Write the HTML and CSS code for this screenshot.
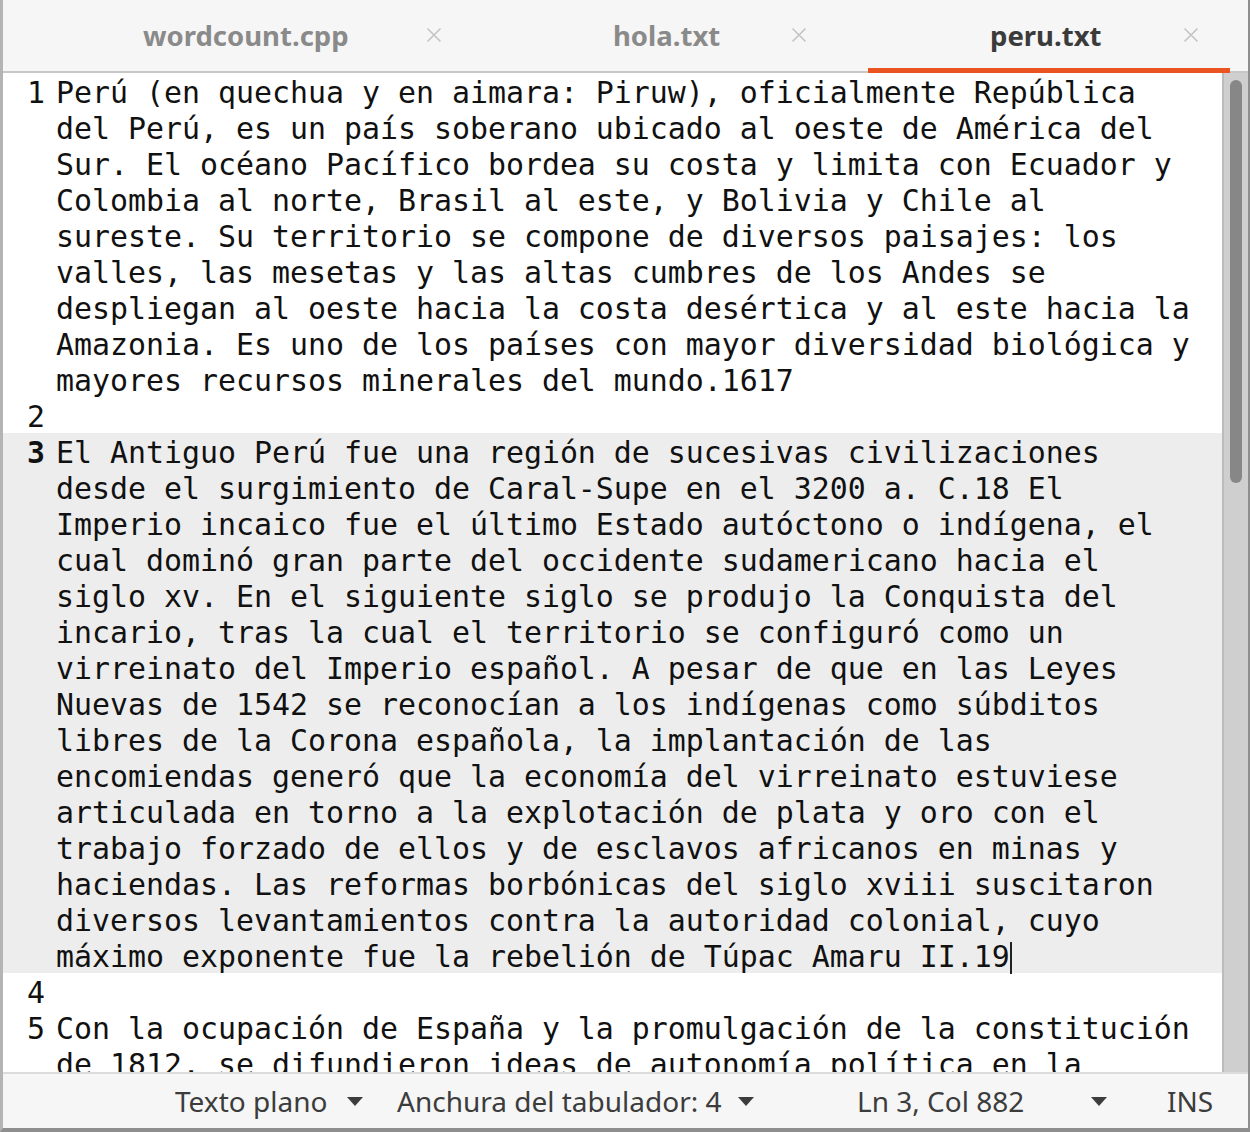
FILE: index.html
```html
<!DOCTYPE html>
<html lang="es">
<head>
<meta charset="utf-8">
<title>peru.txt</title>
<link rel="stylesheet" href="styles.css">
</head>
<body>
<div class="window">
  <div class="tabbar">
    <div class="tab tab1">
      <span class="label">wordcount.cpp</span>
      <svg class="close" width="16" height="16" viewBox="0 0 16 16"><path d="M1.5 1.5 L14.5 14.5 M14.5 1.5 L1.5 14.5"/></svg>
    </div>
    <div class="tab tab2">
      <span class="label">hola.txt</span>
      <svg class="close" width="16" height="16" viewBox="0 0 16 16"><path d="M1.5 1.5 L14.5 14.5 M14.5 1.5 L1.5 14.5"/></svg>
    </div>
    <div class="tab tab3 active">
      <span class="label">peru.txt</span>
      <svg class="close" width="16" height="16" viewBox="0 0 16 16"><path d="M1.5 1.5 L14.5 14.5 M14.5 1.5 L1.5 14.5"/></svg>
    </div>
  </div>
  <div class="editor">
    <div class="textarea">
      <div class="row">
        <div class="num">1</div>
        <div class="txt">
          <div class="vl">Perú (en quechua y en aimara: Piruw), oficialmente República</div>
          <div class="vl">del Perú, es un país soberano ubicado al oeste de América del</div>
          <div class="vl">Sur. El océano Pacífico bordea su costa y limita con Ecuador y</div>
          <div class="vl">Colombia al norte, Brasil al este, y Bolivia y Chile al</div>
          <div class="vl">sureste. Su territorio se compone de diversos paisajes: los</div>
          <div class="vl">valles, las mesetas y las altas cumbres de los Andes se</div>
          <div class="vl">despliegan al oeste hacia la costa desértica y al este hacia la</div>
          <div class="vl">Amazonia. Es uno de los países con mayor diversidad biológica y</div>
          <div class="vl">mayores recursos minerales del mundo.1617</div>
        </div>
      </div>
      <div class="row">
        <div class="num">2</div>
        <div class="txt"><div class="vl">&nbsp;</div></div>
      </div>
      <div class="row current">
        <div class="num">3</div>
        <div class="txt">
          <div class="vl">El Antiguo Perú fue una región de sucesivas civilizaciones</div>
          <div class="vl">desde el surgimiento de Caral-Supe en el 3200 a. C.18 El</div>
          <div class="vl">Imperio incaico fue el último Estado autóctono o indígena, el</div>
          <div class="vl">cual dominó gran parte del occidente sudamericano hacia el</div>
          <div class="vl">siglo xv. En el siguiente siglo se produjo la Conquista del</div>
          <div class="vl">incario, tras la cual el territorio se configuró como un</div>
          <div class="vl">virreinato del Imperio español. A pesar de que en las Leyes</div>
          <div class="vl">Nuevas de 1542 se reconocían a los indígenas como súbditos</div>
          <div class="vl">libres de la Corona española, la implantación de las</div>
          <div class="vl">encomiendas generó que la economía del virreinato estuviese</div>
          <div class="vl">articulada en torno a la explotación de plata y oro con el</div>
          <div class="vl">trabajo forzado de ellos y de esclavos africanos en minas y</div>
          <div class="vl">haciendas. Las reformas borbónicas del siglo xviii suscitaron</div>
          <div class="vl">diversos levantamientos contra la autoridad colonial, cuyo</div>
          <div class="vl">máximo exponente fue la rebelión de Túpac Amaru II.19<span class="caret"></span></div>
        </div>
      </div>
      <div class="row">
        <div class="num">4</div>
        <div class="txt"><div class="vl">&nbsp;</div></div>
      </div>
      <div class="row">
        <div class="num">5</div>
        <div class="txt">
          <div class="vl">Con la ocupación de España y la promulgación de la constitución</div>
          <div class="vl">de 1812, se difundieron ideas de autonomía política en la</div>
        </div>
      </div>
    </div>
    <div class="scrollbar"><div class="thumb"></div></div>
  </div>
  <div class="statusbar">
    <div class="item item1"><span class="stext">Texto plano</span><svg class="arrow" width="16" height="9" viewBox="0 0 16 9"><path d="M0 0 H16 L8 9 Z"/></svg></div>
    <div class="item item2"><span class="stext">Anchura del tabulador: 4</span><svg class="arrow" width="16" height="9" viewBox="0 0 16 9"><path d="M0 0 H16 L8 9 Z"/></svg></div>
    <div class="item item3"><span class="stext">Ln 3, Col 882</span><svg class="arrow" width="16" height="9" viewBox="0 0 16 9"><path d="M0 0 H16 L8 9 Z"/></svg></div>
    <div class="item item4"><span class="stext">INS</span></div>
  </div>
</div>
</body>
</html>
```

FILE: styles.css
```css
html, body {
  margin: 0;
  padding: 0;
  background: #f6f6f6;
}

.window {
  width: 1250px;
  height: 1132px;
  box-sizing: border-box;
  border-left: 3px solid #b4b4b4;
  border-right: 2px solid #8e8e8e;
  border-bottom: 4px solid #8e8e8e;
  display: flex;
  flex-direction: column;
  overflow: hidden;
}

/* ---------- tabs ---------- */
.tabbar {
  height: 73px;
  flex: none;
  display: flex;
  background: #f6f6f6;
  box-shadow: inset 0 -2px 0 #c8c8c8;
  font-family: "Noto Sans", sans-serif;
  font-weight: 700;
  font-size: 27.5px;
}

.tab {
  display: flex;
  align-items: center;
  height: 70px;
  box-sizing: border-box;
}

.tab .label {
  color: #8a8a8a;
  display: block;
  white-space: nowrap;
}

.tab .close {
  flex: none;
  stroke: #c4c4c4;
  stroke-width: 1.6;
  fill: none;
}

.tab1 {
  width: 488px;
  padding-left: 140px;
}
.tab1 .label { width: 283px; }

.tab2 {
  width: 377px;
  padding-left: 122px;
}
.tab2 .label { width: 178px; }

.tab3 {
  width: 362px;
  height: 73px;
  padding-left: 122px;
  padding-bottom: 3px;
  box-shadow: inset 0 -5px 0 #e95420;
}
.tab3 .label { width: 193px; color: #3b3b3b; }

/* ---------- editor ---------- */
.editor {
  flex: none;
  height: 999px;
  display: flex;
  overflow: hidden;
  border-bottom: 2px solid #dcdcdc;
}

.textarea {
  flex: none;
  width: 1219px;
  height: 999px;
  background: #ffffff;
  font-family: "DejaVu Sans Mono", monospace;
  font-size: 29.9px;
  line-height: 36px;
  color: #111111;
  overflow: hidden;
}

.row {
  display: flex;
}

.row.current {
  background: #ededed;
}

.num {
  flex: none;
  width: 42px;
  height: 34px;
  text-align: right;
  padding-top: 2px;
}

.row.current .num {
  font-weight: 700;
}

.txt {
  padding-left: 11px;
}

.vl {
  white-space: pre;
  height: 34px;
  padding-top: 2px;
}

.caret {
  display: inline-block;
  width: 2px;
  height: 32px;
  background: #222222;
  vertical-align: -7px;
}

.scrollbar {
  flex: none;
  width: 24px;
  border-left: 2px solid #bcbcbc;
  background: #cfcfcf;
  padding-top: 7px;
  box-sizing: content-box;
}

.thumb {
  width: 12px;
  height: 403px;
  margin-left: 6px;
  background: #878787;
  border-radius: 6px;
}

/* ---------- status bar ---------- */
.statusbar {
  flex: 1;
  display: flex;
  align-items: center;
  padding-left: 172px;
  background: #f6f6f6;
  font-family: "Noto Sans", sans-serif;
  font-size: 28px;
  color: #3c3c3c;
}

.item {
  display: flex;
  align-items: center;
}

.stext {
  white-space: nowrap;
}

.arrow {
  fill: #3c3c3c;
  flex: none;
}

.item1 .stext { width: 172px; }
.item1 { margin-right: 34px; }

.item2 .stext { width: 341px; }
.item2 { margin-right: 103px; }

.item3 .stext { width: 234px; }
.item3 { margin-right: 60px; }
```
